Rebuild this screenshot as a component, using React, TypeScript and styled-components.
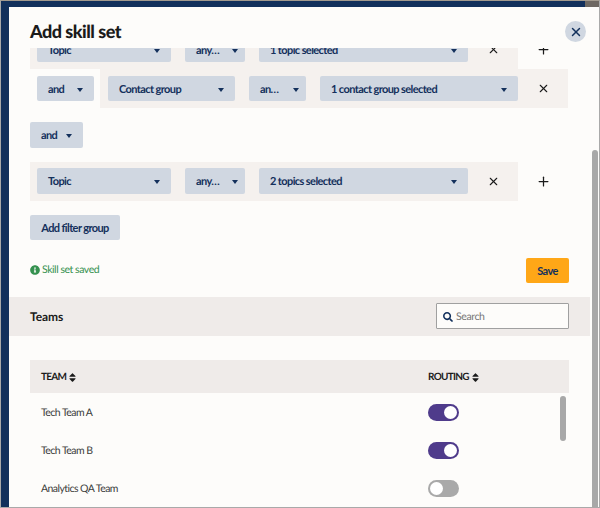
import { X, Plus } from "lucide-react";
import { FaInfoCircle, FaSearch, FaSort } from "react-icons/fa";
import styled, { createGlobalStyle } from "styled-components";

const GlobalStyle = createGlobalStyle`
  html, body {
    margin: 0;
    padding: 0;
    background: #fff;
  }
  * {
    box-sizing: border-box;
  }
`;

const Frame = styled.div`
  width: 600px;
  height: 508px;
  display: flex;
  flex-direction: column;
  overflow: hidden;
  border: 1px solid #a9a9a9;
  border-top-color: #a39a8e;
  background: #12305c;
  font-family: Lato, "Liberation Sans", sans-serif;
  text-rendering: geometricPrecision;
`;

const TopStrip = styled.div`
  height: 6px;
  flex: none;
  display: flex;
  justify-content: flex-end;
  &::after {
    content: "";
    width: 14px;
    background: #6e6862;
  }
`;

const Modal = styled.div`
  flex: 1;
  min-height: 0;
  margin-left: 8px;
  display: flex;
  flex-direction: column;
  background: #fdfcfa;
`;

const Header = styled.header`
  height: 41px;
  flex: none;
  display: flex;
  justify-content: space-between;
  padding: 14px 13px 0 21px;
`;

const Title = styled.h2`
  margin: 0;
  font-size: 18px;
  line-height: 20px;
  font-weight: 900;
  letter-spacing: -0.5px;
  color: #1b1b1b;
`;

const CloseButton = styled.button`
  width: 21px;
  height: 21px;
  padding: 0;
  border: none;
  border-radius: 50%;
  background: #d0d7e1;
  color: #12305c;
  display: flex;
  align-items: center;
  justify-content: center;
`;

const ScrollArea = styled.div`
  flex: 1;
  min-height: 0;
  display: flex;
  overflow: hidden;
`;

const Content = styled.div`
  width: 581px;
  flex: none;
  margin-top: -18px;
`;

const ScrollGutter = styled.div`
  width: 9px;
  flex: none;
  padding: 102px 1px 0 2px;
`;

const ScrollThumb = styled.div`
  height: 100%;
  border-radius: 3px 3px 0 0;
  background: #a8a8a8;
`;

const Filters = styled.div`
  padding: 0 0 0 21px;
  display: flex;
  flex-direction: column;
`;

const FilterRow = styled.div`
  display: flex;
  align-items: stretch;
  height: 39px;
`;

const Panel = styled.div`
  display: flex;
  align-items: center;
  gap: 14px;
  background: #f5f1ee;
  padding-left: ${(p) => p.$inset}px;
`;

const Lead = styled.div`
  width: 70px;
  flex: none;
  display: flex;
  align-items: center;
  padding-left: 7px;
`;

const Select = styled.div`
  width: ${(p) => p.$w}px;
  height: 25.5px;
  flex: none;
  display: flex;
  align-items: center;
  justify-content: space-between;
  padding: 1px ${(p) => p.$pr ?? 11}px 0 11px;
  border-radius: 2px;
  background: #d0d7e1;
  color: #14305c;
  font-size: 11px;
  font-weight: 700;
  letter-spacing: -0.6px;
  white-space: nowrap;
`;

const Caret = styled.span`
  width: 0;
  height: 0;
  flex: none;
  border-left: 3.5px solid transparent;
  border-right: 3.5px solid transparent;
  border-top: 4px solid #14305c;
  margin-top: 1px;
`;

const IconCell = styled.div`
  width: 50px;
  flex: none;
  margin-left: ${(p) => p.$pull ?? 0}px;
  display: flex;
  align-items: center;
  justify-content: center;
  color: #1b1b1b;
`;

const StandaloneSelect = styled(Select)`
  margin-top: 14px;
`;

const GroupRow = styled(FilterRow)`
  margin-top: 14px;
`;

const AddGroup = styled.button`
  width: 90px;
  height: 25.5px;
  margin-top: 14px;
  padding: 1px 0 0;
  border: none;
  border-radius: 2px;
  background: #d0d7e1;
  color: #14305c;
  font-family: inherit;
  font-size: 11px;
  font-weight: 700;
  letter-spacing: -0.6px;
`;

const SaveRow = styled.div`
  display: flex;
  align-items: center;
  justify-content: space-between;
  margin: 17.5px 21px 13.5px 0;
`;

const Status = styled.div`
  display: flex;
  align-items: center;
  gap: 2px;
  color: #35914f;
  font-size: 10.5px;
  line-height: 13px;
  letter-spacing: -0.45px;
`;

const SaveButton = styled.button`
  width: 43px;
  height: 25.5px;
  padding: 1px 0 0;
  border: none;
  border-radius: 2px;
  background: #ffa717;
  color: #14305c;
  font-family: inherit;
  font-size: 11px;
  font-weight: 700;
  letter-spacing: -0.6px;
`;

const TeamsBar = styled.div`
  height: 39px;
  display: flex;
  align-items: center;
  justify-content: space-between;
  padding: 0 21px;
  background: #efebe9;
`;

const TeamsTitle = styled.h3`
  margin: 0;
  font-size: 12px;
  font-weight: 700;
  letter-spacing: -0.1px;
  color: #1b1b1b;
`;

const SearchBox = styled.div`
  width: 133px;
  height: 26px;
  display: flex;
  align-items: center;
  gap: 3px;
  padding: 1px 0 0 6px;
  border: 1.5px solid #a0a0a0;
  border-radius: 1px;
  background: #fdfcfa;
  color: #12305c;
  font-size: 10.5px;
  letter-spacing: -0.4px;
  span {
    color: #777;
  }
`;

const Table = styled.div`
  margin: 24.5px 21px 0;
`;

const HeadRow = styled.div`
  height: 33px;
  display: grid;
  grid-template-columns: 387px 1fr;
  align-items: center;
  background: #efebe9;
`;

const HeadCell = styled.div`
  display: flex;
  align-items: center;
  gap: 1px;
  padding: 1px 0 0 11px;
  color: #1b1b1b;
  font-size: 10px;
  font-weight: 700;
  letter-spacing: -0.7px;
`;

const Rows = styled.div`
  position: relative;
`;

const TeamRow = styled.div`
  height: 38px;
  display: grid;
  grid-template-columns: 387px 1fr;
  align-items: center;
  color: #3c3c3c;
  font-size: 10.5px;
  letter-spacing: -0.55px;
`;

const TeamName = styled.div`
  padding: 1px 0 0 11px;
`;

const RoutingCell = styled.div`
  padding-left: 11px;
  display: flex;
`;

const Toggle = styled.div`
  width: 31px;
  height: 17px;
  display: flex;
  align-items: center;
  justify-content: ${(p) => (p.$on ? "flex-end" : "flex-start")};
  padding: 0 2px;
  border-radius: 9px;
  background: ${(p) => (p.$on ? "#4f3b8b" : "#a9a9a9")};
  &::after {
    content: "";
    width: 13px;
    height: 13px;
    border-radius: 50%;
    background: #fff;
  }
`;

const RowsThumb = styled.div`
  position: absolute;
  top: 3px;
  right: 3px;
  width: 6px;
  height: 45px;
  border-radius: 3px;
  background: #a8a8a8;
`;

const teams = [
  { name: "Tech Team A", on: true },
  { name: "Tech Team B", on: true },
  { name: "Analytics QA Team", on: false },
];

const App = () => {
  return (
    <Frame>
      <GlobalStyle />
      <TopStrip />
      <Modal>
        <Header>
          <Title>Add skill set</Title>
          <CloseButton>
            <X size={14} strokeWidth={2.5} />
          </CloseButton>
        </Header>
        <ScrollArea>
          <Content>
            <Filters>
              <FilterRow>
                <Panel $inset={7}>
                  <Select $w={134}>
                    Topic
                    <Caret />
                  </Select>
                  <Select $w={60} $pr={7}>
                    any…
                    <Caret />
                  </Select>
                  <Select $w={209}>
                    1 topic selected
                    <Caret />
                  </Select>
                  <IconCell $pull={-14}>
                    <X size={13} strokeWidth={2} />
                  </IconCell>
                </Panel>
                <IconCell>
                  <Plus size={15} strokeWidth={2} />
                </IconCell>
              </FilterRow>
              <FilterRow>
                <Lead>
                  <Select $w={57}>
                    and
                    <Caret />
                  </Select>
                </Lead>
                <Panel $inset={8}>
                  <Select $w={127}>
                    Contact group
                    <Caret />
                  </Select>
                  <Select $w={57} $pr={7}>
                    an…
                    <Caret />
                  </Select>
                  <Select $w={198}>
                    1 contact group selected
                    <Caret />
                  </Select>
                  <IconCell $pull={-14}>
                    <X size={13} strokeWidth={2} />
                  </IconCell>
                </Panel>
              </FilterRow>
              <StandaloneSelect $w={53}>
                and
                <Caret />
              </StandaloneSelect>
              <GroupRow>
                <Panel $inset={7}>
                  <Select $w={134}>
                    Topic
                    <Caret />
                  </Select>
                  <Select $w={60} $pr={7}>
                    any…
                    <Caret />
                  </Select>
                  <Select $w={209}>
                    2 topics selected
                    <Caret />
                  </Select>
                  <IconCell $pull={-14}>
                    <X size={13} strokeWidth={2} />
                  </IconCell>
                </Panel>
                <IconCell>
                  <Plus size={15} strokeWidth={2} />
                </IconCell>
              </GroupRow>
              <AddGroup>Add filter group</AddGroup>
              <SaveRow>
                <Status>
                  <FaInfoCircle size={10} />
                  Skill set saved
                </Status>
                <SaveButton>Save</SaveButton>
              </SaveRow>
            </Filters>
            <TeamsBar>
              <TeamsTitle>Teams</TeamsTitle>
              <SearchBox>
                <FaSearch size={10} />
                <span>Search</span>
              </SearchBox>
            </TeamsBar>
            <Table>
              <HeadRow>
                <HeadCell>
                  TEAM
                  <FaSort size={11} />
                </HeadCell>
                <HeadCell>
                  ROUTING
                  <FaSort size={11} />
                </HeadCell>
              </HeadRow>
              <Rows>
                {teams.map((team) => (
                  <TeamRow key={team.name}>
                    <TeamName>{team.name}</TeamName>
                    <RoutingCell>
                      <Toggle $on={team.on} />
                    </RoutingCell>
                  </TeamRow>
                ))}
                <RowsThumb />
              </Rows>
            </Table>
          </Content>
          <ScrollGutter>
            <ScrollThumb />
          </ScrollGutter>
        </ScrollArea>
      </Modal>
    </Frame>
  );
};

export default App;
